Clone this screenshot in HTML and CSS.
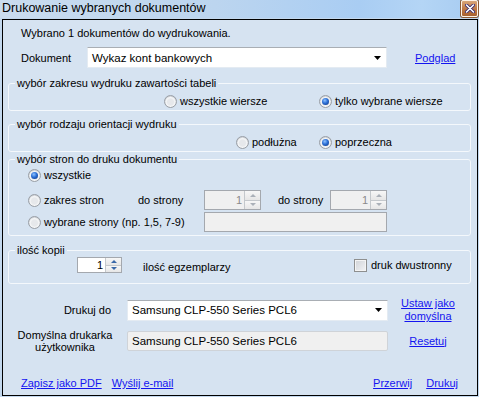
FILE: index.html
```html
<!DOCTYPE html>
<html lang="pl">
<head>
  <meta charset="UTF-8">
  <title>Drukowanie wybranych dokumentów</title>
  <link rel="stylesheet" href="styles.css">
</head>
<body>
  <div class="titlebar">
    <span class="title">Drukowanie wybranych dokumentów</span>
    <span class="close">
      <svg width="10" height="9" viewBox="0 0 10 9">
        <path d="M1.5 1 L8.5 8 M8.5 1 L1.5 8" stroke="#3a2a6a" stroke-width="3.2" stroke-linecap="round"/>
        <path d="M1.5 1 L8.5 8 M8.5 1 L1.5 8" stroke="#fff" stroke-width="1.6" stroke-linecap="round"/>
      </svg>
    </span>
  </div>

  <div class="window">
    <div class="info">Wybrano 1 dokumentów do wydrukowania.</div>

    <div class="doc-row">
      <span class="doc-label">Dokument</span>
      <div class="combo doc-combo">
        <span>Wykaz kont bankowych</span>
        <svg class="arrow" width="7" height="4" viewBox="0 0 7 4"><path d="M0 0 H7 L3.5 4 Z" fill="#000"/></svg>
      </div>
      <a class="link preview" href="#">Podglad</a>
    </div>

    <div class="group g-range">
      <div class="group-title">wybór zakresu wydruku zawartości tabeli</div>
      <div class="group-row">
        <label class="opt w-all"><span class="radio"></span>wszystkie wiersze</label>
        <label class="opt"><span class="radio on"></span>tylko wybrane wiersze</label>
      </div>
    </div>

    <div class="group g-orient">
      <div class="group-title">wybór rodzaju orientacji wydruku</div>
      <div class="group-row">
        <label class="opt w-long"><span class="radio"></span>podłużna</label>
        <label class="opt"><span class="radio on"></span>poprzeczna</label>
      </div>
    </div>

    <div class="group g-pages">
      <div class="group-title">wybór stron do druku dokumentu</div>
      <div class="pages-row r1">
        <label class="opt"><span class="radio on"></span>wszystkie</label>
      </div>
      <div class="pages-row r2">
        <label class="opt w-range"><span class="radio"></span>zakres stron</label>
        <span class="to-label">do strony</span>
        <div class="spin off">
          <span class="val">1</span>
          <span class="btns"><span class="up"></span><span class="down"></span></span>
        </div>
        <span class="to-label second">do strony</span>
        <div class="spin off">
          <span class="val">1</span>
          <span class="btns"><span class="up"></span><span class="down"></span></span>
        </div>
      </div>
      <div class="pages-row r3">
        <label class="opt w-sel"><span class="radio"></span>wybrane strony (np. 1,5, 7-9)</label>
        <div class="textbox off"></div>
      </div>
    </div>

    <div class="group g-copies">
      <div class="group-title">ilość kopii</div>
      <div class="copies-row">
        <div class="spin copies">
          <span class="val">1</span>
          <span class="btns"><span class="up"></span><span class="down"></span></span>
        </div>
        <span class="copies-label">ilość egzemplarzy</span>
        <label class="check-opt"><span class="check"></span>druk dwustronny</label>
      </div>
    </div>

    <div class="printer-row">
      <span class="p-label right">Drukuj do</span>
      <div class="combo printer-combo">
        <span>Samsung CLP-550 Series PCL6</span>
        <svg class="arrow" width="7" height="4" viewBox="0 0 7 4"><path d="M0 0 H7 L3.5 4 Z" fill="#000"/></svg>
      </div>
      <a class="link side" href="#">Ustaw jako<br>domyślna</a>
    </div>

    <div class="printer-row default">
      <span class="p-label center">Domyślna drukarka<br>użytkownika</span>
      <div class="textbox readonly">Samsung CLP-550 Series PCL6</div>
      <a class="link side" href="#">Resetuj</a>
    </div>

    <div class="footer">
      <a class="link" href="#">Zapisz jako PDF</a>
      <a class="link" href="#">Wyślij e-mail</a>
      <span class="spacer"></span>
      <a class="link" href="#">Przerwij</a>
      <a class="link" href="#">Drukuj</a>
    </div>
  </div>
</body>
</html>
```

FILE: styles.css
```css
body {
  margin: 0;
  width: 479px;
  height: 397px;
  overflow: hidden;
  background: #c3d8ee;
  font-family: "Liberation Sans", Arial, sans-serif;
  font-size: 11px;
  color: #000;
}

.titlebar {
  height: 18px;
  display: flex;
  align-items: flex-start;
  justify-content: space-between;
  background: linear-gradient(to right, #cadcef 0%, #bcd5ef 45%, #a9cdf3 75%, #b4d5f5 88%, #a6cbf1 100%);
}

.title {
  font-size: 12.5px;
  line-height: 16px;
  padding-left: 2px;
}

.close {
  width: 15px;
  height: 15px;
  margin-right: 1px;
  border: 1px solid #fff3e6;
  border-radius: 2px;
  box-shadow: 0 0 0 1px #8a5a36;
  background: linear-gradient(#d9a679, #c07a48 50%, #a9612f);
  display: flex;
  align-items: center;
  justify-content: center;
}

.window {
  box-sizing: border-box;
  height: 377px;
  margin: 1px 1px 1px 2px;
  border: 1px solid #000;
  background: #d6e3f1;
}

.info {
  margin: 7px 0 0 18px;
  line-height: 13px;
}

.doc-row {
  display: flex;
  align-items: center;
  height: 21px;
  margin-top: 7px;
}

.doc-label {
  width: 66px;
  margin-left: 18px;
}

.combo {
  box-sizing: border-box;
  height: 21px;
  display: flex;
  align-items: center;
  justify-content: space-between;
  padding: 0 5px 0 4px;
  background: #fff;
  border: 1px solid #e4ebf2;
  border-top-color: #a9aeb4;
  font-size: 11.5px;
}

.doc-combo {
  width: 300px;
}

.link {
  color: #1414f0;
  text-decoration: underline;
  line-height: 12px;
}

.preview {
  margin-left: 28px;
}

.group {
  box-sizing: border-box;
  margin: 0 6px 0 5px;
  border: 1px solid #f4f8fc;
  border-radius: 3px;
}

.group-title {
  display: table;
  height: 13px;
  line-height: 13px;
  margin: -7px 0 0 6px;
  padding: 0 2px;
  background: #d6e3f1;
}

.g-range {
  height: 28px;
  margin-top: 15px;
}

.g-orient {
  height: 28px;
  margin-top: 13px;
}

.g-pages {
  height: 77px;
  margin-top: 7px;
}

.g-copies {
  height: 34px;
  margin-top: 14px;
}

.group-row {
  display: flex;
  align-items: center;
  height: 13px;
  margin-top: 5px;
}

.g-range .group-row {
  padding-left: 155px;
}

.g-orient .group-row {
  padding-left: 227px;
}

.w-all {
  width: 155px;
}

.w-long {
  width: 83px;
}

.opt {
  display: flex;
  align-items: center;
  gap: 3px;
  line-height: 13px;
  white-space: nowrap;
}

.radio {
  box-sizing: border-box;
  width: 13px;
  height: 13px;
  border-radius: 50%;
  border: 1px solid #9a9fa6;
  background: radial-gradient(circle at 50% 55%, #e6e8eb 0 3px, #f6f7f8 4.5px, #c9cdd2 6px);
  display: flex;
  align-items: center;
  justify-content: center;
}

.radio.on::after {
  content: "";
  width: 7px;
  height: 7px;
  border-radius: 50%;
  background: radial-gradient(circle at 40% 35%, #8fc2ff 0, #2b6fd6 45%, #0c2f78 100%);
}

.pages-row {
  display: flex;
  align-items: center;
  padding-left: 19px;
}

.r1 {
  height: 13px;
  margin-top: 3px;
}

.r2 {
  height: 20px;
  margin-top: 8px;
}

.r3 {
  height: 20px;
  margin-top: 2px;
}

.w-range {
  width: 110px;
}

.to-label {
  width: 66px;
}

.to-label.second {
  width: 52px;
  margin-left: 17px;
}

.w-sel {
  width: 176px;
}

.spin {
  box-sizing: border-box;
  width: 57px;
  height: 20px;
  display: flex;
  border: 1px solid #a4a8ae;
  background: #fff;
}

.spin .val {
  flex: 1;
  text-align: right;
  line-height: 18px;
  padding-right: 2px;
}

.spin.off {
  background: #f0f0f0;
}

.spin.off .val {
  color: #8a8a8a;
}

.btns {
  width: 15px;
  display: flex;
  flex-direction: column;
  border-left: 1px solid #c4c8cc;
}

.btns span {
  flex: 1;
  display: flex;
  align-items: center;
  justify-content: center;
  background: linear-gradient(#f7f7f7, #e6e6e6);
}

.btns .up {
  border-bottom: 1px solid #c4c8cc;
}

.btns .up::after,
.btns .down::after {
  content: "";
  border-left: 3px solid transparent;
  border-right: 3px solid transparent;
}

.btns .up::after {
  border-bottom: 3px solid #aab0b8;
}

.btns .down::after {
  border-top: 3px solid #aab0b8;
}

.copies .btns .up::after {
  border-bottom-color: #3a68a8;
}

.copies .btns .down::after {
  border-top-color: #3a68a8;
}

.textbox {
  box-sizing: border-box;
  width: 183px;
  height: 20px;
  border: 1px solid #a4a8ae;
}

.textbox.off {
  background: #f0f0f0;
}

.copies-row {
  display: flex;
  align-items: center;
  height: 16px;
  padding-left: 68px;
}

.spin.copies {
  width: 45px;
  height: 16px;
}

.spin.copies .val {
  line-height: 14px;
}

.copies-label {
  width: 211px;
  margin-left: 21px;
  padding-top: 3px;
}

.check-opt {
  display: flex;
  align-items: center;
  gap: 4px;
}

.check {
  box-sizing: border-box;
  width: 13px;
  height: 13px;
  border: 1px solid #8e8f8f;
  background: linear-gradient(135deg, #d0d3d7, #f2f3f5);
  box-shadow: inset 0 0 0 1px #f4f4f4;
}

.printer-row {
  display: flex;
  align-items: center;
  margin-top: 13px;
}

.printer-row.default {
  margin-top: 6px;
}

.p-label {
  width: 124px;
  line-height: 12px;
}

.p-label.right {
  box-sizing: border-box;
  text-align: right;
  padding-right: 16px;
}

.p-label.center {
  text-align: center;
}

.printer-combo {
  width: 261px;
}

.printer-row .side {
  width: 56px;
  margin-left: 12px;
  text-align: center;
  line-height: 13px;
}

.textbox.readonly {
  width: 261px;
  background: #f0f0f0;
  border-color: #cfd3d8;
  border-radius: 2px;
  padding-left: 4px;
  line-height: 18px;
  font-size: 11.5px;
}

.footer {
  display: flex;
  align-items: center;
  gap: 10px;
  margin-top: 24px;
  padding: 0 19px 0 18px;
  line-height: 13px;
}

.spacer {
  flex: 1;
}

.footer .link + .spacer + .link {
  margin-right: 4px;
}
```
